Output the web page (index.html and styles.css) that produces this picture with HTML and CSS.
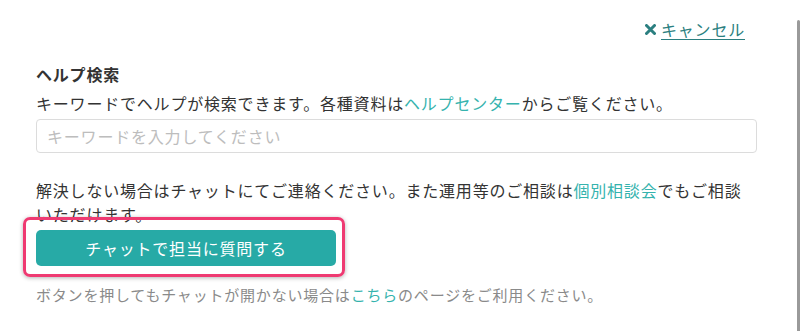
FILE: index.html
```html
<!DOCTYPE html>
<html lang="ja">
<head>
<meta charset="utf-8">
<title>ヘルプ検索</title>
<link rel="stylesheet" href="styles.css">
</head>
<body>
<div class="panel">
  <div class="cancel-row">
    <a class="cancel" href="#"><svg class="x" width="11" height="11" viewBox="0 0 11 11" aria-hidden="true"><path d="M1.5 1.5 L9.5 9.5 M9.5 1.5 L1.5 9.5" stroke="#2b7f80" stroke-width="3" stroke-linecap="round"/></svg><span class="cancel-text">キャンセル</span></a>
  </div>
  <h2 class="title">ヘルプ検索</h2>
  <p class="text">キーワードでヘルプが検索できます。各種資料は<a class="link" href="#">ヘルプセンター</a>からご覧ください。</p>
  <input class="search" type="text" placeholder="キーワードを入力してください">
  <p class="text text-gap">解決しない場合はチャットにてご連絡ください。また運用等のご相談は<a class="link" href="#">個別相談会</a>でもご相談いただけます。</p>
  <div class="btn-wrap">
    <button class="chat-btn" type="button">チャットで担当に質問する</button>
    <span class="highlight"></span>
  </div>
  <p class="note">ボタンを押してもチャットが開かない場合は<a class="link" href="#">こちら</a>のページをご利用ください。</p>
</div>
<div class="scrollbar"></div>
</body>
</html>
```
FILE: styles.css
```css
html, body {
  margin: 0;
  padding: 0;
  background: #fff;
}
body {
  font-family: "Noto Sans CJK JP", "Noto Sans", sans-serif;
  color: #333;
  font-size: 16px;
  letter-spacing: 0.05em;
}
.panel {
  padding: 17px 43px 0 36px;
}
.cancel-row {
  display: flex;
  justify-content: flex-end;
  padding-right: 12px;
  line-height: 24px;
}
.cancel {
  display: flex;
  align-items: center;
  color: #2b7f80;
  text-decoration: none;
}
.x {
  display: block;
  margin-right: 5px;
  margin-top: 1px;
}
.cancel-text {
  text-decoration: underline;
  text-underline-offset: 3px;
}
.title {
  margin: 21px 0 0;
  font-size: 16px;
  font-weight: bold;
  line-height: 24px;
  color: #333;
}
.text {
  margin: 5px 0 0;
  line-height: 24px;
}
.text-gap {
  margin-top: 25px;
}
.link {
  color: #35b3ae;
  text-decoration: none;
}
.search {
  display: block;
  box-sizing: border-box;
  width: 100%;
  height: 34px;
  margin-top: 4px;
  padding: 0 10px;
  border: 1px solid #dcdcdc;
  border-radius: 4px;
  font-family: inherit;
  font-size: 16px;
  letter-spacing: 0.05em;
  color: #333;
  outline: none;
}
.search::placeholder {
  color: #bdbdbd;
}
.btn-wrap {
  position: relative;
  width: 300px;
  margin-top: 4px;
}
.chat-btn {
  display: block;
  width: 300px;
  height: 36px;
  border: none;
  border-radius: 5px;
  background: #27aaa6;
  color: #fff;
  font-family: inherit;
  font-size: 16px;
  letter-spacing: 0.05em;
  padding: 0;
}
.highlight {
  position: absolute;
  left: -13px;
  top: -13px;
  right: -9px;
  bottom: -11px;
  border: 3px solid #ef3a72;
  border-radius: 7px;
  box-shadow: 0 1px 4px rgba(0, 0, 0, 0.3);
  pointer-events: none;
}
.note {
  margin: 18px 0 0;
  font-size: 15px;
  line-height: 22px;
  color: #8a8a8a;
}
.scrollbar {
  position: fixed;
  right: 0;
  top: 20px;
  bottom: 0;
  width: 3px;
  background: #9a9a9a;
  border-radius: 2px 2px 0 0;
}
```
